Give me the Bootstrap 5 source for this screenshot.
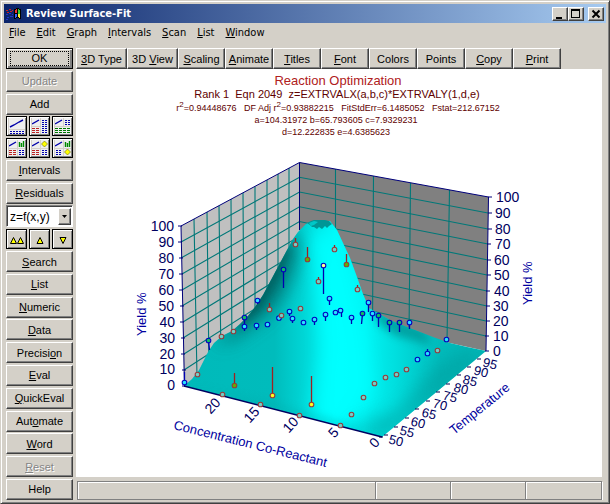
<!DOCTYPE html>
<html lang="en">
<head>
<meta charset="utf-8">
<meta name="viewport" content="width=device-width, initial-scale=1">
<title>Review Surface-Fit</title>
<link href="https://cdn.jsdelivr.net/npm/bootstrap@5.3.0/dist/css/bootstrap.min.css" rel="stylesheet">
<style>
:root{--face:#d4d0c8}
body{background:var(--face);font:11px/14px "Liberation Sans",Arial,sans-serif;color:#000}
.window{border:1px solid;border-color:var(--face) #404040 #404040 var(--face);box-shadow:inset 1px 1px #fff,inset -1px -1px #808080;padding:3px}
.titlebar{height:19px;background:linear-gradient(90deg,#0a246a,#a6caf0);padding:0 2px;color:#fff}
.titlebar h1{font:bold 11px/18px "DejaVu Sans Condensed","DejaVu Sans",sans-serif}
.capbtn,.tool{background:var(--face);border:1px solid;border-color:#fff #404040 #404040 #fff;box-shadow:inset -1px -1px #808080;color:#000;border-radius:0;padding:0;font-size:11px;line-height:14px;white-space:nowrap}
.capbtn{width:16px;height:14px}
.menus{height:20px;font:11px/20px "DejaVu Sans Condensed","DejaVu Sans",sans-serif;padding-left:5px;gap:11px}
.menus a{color:#000;text-decoration:none}
u{text-underline-offset:1px;text-decoration-thickness:1px}
.workarea{padding:5px 0 0 2px;gap:3px}
.side{width:67px}
.tool{height:21px;text-align:center}
.tool:disabled{color:#858585;text-shadow:1px 1px #fff}
.framed{border:1px solid #000;box-shadow:inset 1px 1px #fff,inset -1px -1px #808080}
.default{border:1px solid #000;box-shadow:inset 1px 1px #fff,inset -2px -2px #808080;padding:2px 3px}
.default span{border:1px dotted #000;line-height:13px}
.pic{height:20px;flex:1 1 0}
.pairs{gap:2px}
.combo{height:22px;border:1px solid;border-color:#808080 #fff #fff #808080;box-shadow:inset 1px 1px #404040;background:#fff;padding:2px 1px 1px 2px}
.combo>*{grid-area:1/1}
.combo select{appearance:none;border:0;background:none;font-size:12px;line-height:16px;padding:0 13px 0 1px;width:100%;color:#000}
.drop{width:13px;height:100%;pointer-events:none;justify-self:end}
.topbar .tool{flex:0 0 48px}
.topbar .tool.wide{flex-basis:51px}
.topbar .tool.near{flex-basis:47px}
.plot{background:#fff;min-height:0}
.plot svg{font-family:"Liberation Sans",Arial,sans-serif}
.status{height:19px;margin:4px 0 0 1px;border:1px solid #808080;box-shadow:1px 1px #fff,inset 1px 1px #fff}
.status div{border-right:1px solid #808080;box-shadow:1px 0 #fff}
.status div:last-child{border:0;box-shadow:none}
.pane{width:75px}
.tick{fill:#000060;font-size:14px}
.axis{fill:#0000a0;font-size:13px}
.note{fill:#600000;text-anchor:middle;white-space:pre}
</style>
<script src="https://cdn.jsdelivr.net/npm/bootstrap@5.3.0/dist/js/bootstrap.bundle.min.js"></script>
</head>
<body>
<div class="window d-flex flex-column vh-100">
  <header class="titlebar d-flex align-items-center">
    <svg width="16" height="14" viewBox="0 0 16 14" class="me-1" aria-hidden="true" shape-rendering="crispEdges">
      <path d="M8 2l3-1 4 1v10l-4-1-3 1z" fill="#000"/>
      <path d="M9 3l2-1v4H9z" fill="#e33"/><path d="M12 2l2 1v4h-2z" fill="#3c3"/><path d="M9 7h2v3l-2 1z" fill="#36f"/><path d="M12 7h2v4l-2-1z" fill="#fe3"/>
      <path d="M0 3h2v1H0zM3 2h2v1H3zM6 3h1v1H6zM1 5h2v1H1zM4 4h2v1H4z" fill="#c22"/>
      <path d="M0 7h2v1H0zM3 6h2v1H3zM6 7h1v1H6zM1 10h2v1H1zM4 9h3v1H4zM0 12h2v1H0z" fill="#23c"/>
    </svg>
    <h1 class="m-0 flex-grow-1">Review Surface-Fit</h1>
    <button class="capbtn d-flex" aria-label="Minimize"><svg width="14" height="12"><path d="M3 9h6v2H3z"/></svg></button>
    <button class="capbtn d-flex" aria-label="Maximize"><svg width="14" height="12"><path d="M2 1h9v9H2zM3 3v6h7V3z" fill-rule="evenodd"/></svg></button>
    <button class="capbtn d-flex ms-1" aria-label="Close"><svg width="14" height="12"><path d="M3.500 2.500l7 7m0-7l-7 7" stroke="#000" stroke-width="2"/></svg></button>
  </header>
  <nav class="menus d-flex" aria-label="Menu">
    <a href="#"><u>F</u>ile</a><a href="#"><u>E</u>dit</a><a href="#"><u>G</u>raph</a><a href="#"><u>I</u>ntervals</a><a href="#"><u>S</u>can</a><a href="#"><u>L</u>ist</a><a href="#"><u>W</u>indow</a>
  </nav>
  <div class="workarea d-flex flex-grow-1 overflow-hidden">
    <aside class="side d-flex flex-column justify-content-between flex-shrink-0">
      <button class="tool default d-grid"><span>OK</span></button>
      <button class="tool" disabled>Update</button>
      <button class="tool">Add</button>
      <div class="d-flex pairs">
        <button class="tool framed pic" aria-label="Graph and table"><svg width="16" height="16" viewBox="0 0 16 16"><path fill="#eee" d="M0 0h16v11H0zM0 12h16v4H0z"/><path d="M1 9l4-2 5-3 4-2" stroke="#00a" stroke-width="1.400" fill="none"/><path d="M1 13.500h14M1 15.500h14" stroke="#00a" stroke-dasharray="2 1"/></svg></button>
        <button class="tool framed pic" aria-label="Graph, summary and list"><svg width="16" height="16" viewBox="0 0 16 16"><path fill="#eee" d="M0 0h8v8H0zM0 9h8v7H0zM9 0h7v16H9z"/><path d="M0 6l7-4" stroke="#00a" stroke-width="1.400"/><path d="M10 2.500h6M10 4.500h6M10 6.500h6M10 8.500h6M10 10.500h6M10 12.500h6M10 14.500h6" stroke="#00a" stroke-dasharray="2 1"/><path d="M0 10.500h8M0 12.500h8M0 14.500h8" stroke="#b22" stroke-dasharray="3 1"/></svg></button>
        <button class="tool framed pic" aria-label="Graph, list and summary"><svg width="16" height="16" viewBox="0 0 16 16"><path fill="#eee" d="M0 0h8v8H0zM9 0h7v8H9zM0 9h16v7H0z"/><path d="M0 6l7-4" stroke="#00a" stroke-width="1.400"/><path d="M10 2.500h6M10 4.500h6M10 6.500h6" stroke="#00a" stroke-dasharray="2 1"/><path d="M0 10.500h16M0 12.500h16M0 14.500h16" stroke="#070" stroke-dasharray="3 1"/></svg></button>
      </div>
      <div class="d-flex pairs">
        <button class="tool framed pic" aria-label="Four panels"><svg width="16" height="16" viewBox="0 0 16 16"><path fill="#eee" d="M0 0h8v8H0zM9 0h7v8H9zM0 9h8v7H0zM9 9h7v7H9z"/><path d="M0 6l7-4" stroke="#00a" stroke-width="1.400"/><path d="M10.500 2v5M12.500 3v4M14.500 1v6" stroke="#080" stroke-width="1.400"/><path d="M0 10.500h8M0 12.500h8M0 14.500h8" stroke="#b22" stroke-dasharray="3 1"/><path d="M10 10.500h6M10 12.500h6M10 14.500h6" stroke="#00a" stroke-dasharray="2 1"/></svg></button>
        <button class="tool framed pic" aria-label="Residual panels"><svg width="16" height="16" viewBox="0 0 16 16"><path fill="#eee" d="M0 0h8v8H0zM9 0h7v8H9zM0 9h8v7H0zM9 9h7v7H9z"/><path d="M0 6l7-4" stroke="#00a" stroke-width="1.400"/><path d="M12.500 1l3 3-3 3-3-3z" fill="#ff0" stroke="#660" stroke-width=".6"/><path d="M0 10.500h8M0 12.500h8M0 14.500h8" stroke="#b22" stroke-dasharray="3 1"/><path d="M10 10.500h6M10 12.500h6M10 14.500h6" stroke="#00a" stroke-dasharray="2 1"/></svg></button>
        <button class="tool framed pic" aria-label="Distribution panels"><svg width="16" height="16" viewBox="0 0 16 16"><path fill="#eee" d="M0 0h8v8H0zM9 0h7v8H9zM0 9h8v7H0zM9 9h7v7H9z"/><path d="M0 6l7-4" stroke="#00a" stroke-width="1.400"/><path d="M10.500 2v5M12.500 3v4M14.500 1v6" stroke="#080" stroke-width="1.400"/><path d="M12.500 9l3 3-3 3-3-3z" fill="#ff0" stroke="#660" stroke-width=".6"/><path d="M1 10.500h6M1 12.500h6M1 14.500h6" stroke="#00a" stroke-dasharray="2 1"/></svg></button>
      </div>
      <button class="tool"><u>I</u>ntervals</button>
      <button class="tool"><u>R</u>esiduals</button>
      <div class="combo d-grid">
        <select aria-label="Function"><option>z=f(x,y)</option></select>
        <span class="drop tool"><svg width="11" height="14" class="d-block"><path d="M3 6h5L5.500 9z"/></svg></span>
      </div>
      <div class="d-flex pairs">
        <button class="tool framed pic" aria-label="First"><svg width="16" height="14" viewBox="0 0 16 14"><path d="M1.500 10.500l3-6 3 6zM8.500 10.500l3-6 3 6z" fill="#ff0" stroke="#000"/></svg></button>
        <button class="tool framed pic" aria-label="Previous"><svg width="16" height="14" viewBox="0 0 16 14"><path d="M5 10.500l3-6 3 6z" fill="#ff0" stroke="#000"/></svg></button>
        <button class="tool framed pic" aria-label="Next"><svg width="16" height="14" viewBox="0 0 16 14"><path d="M5 4.500l3 6 3-6z" fill="#ff0" stroke="#000"/></svg></button>
      </div>
      <button class="tool"><u>S</u>earch</button>
      <button class="tool"><u>L</u>ist</button>
      <button class="tool"><u>N</u>umeric</button>
      <button class="tool"><u>D</u>ata</button>
      <button class="tool">Precisi<u>o</u>n</button>
      <button class="tool"><u>E</u>val</button>
      <button class="tool"><u>Q</u>uickEval</button>
      <button class="tool">Aut<u>o</u>mate</button>
      <button class="tool"><u>W</u>ord</button>
      <button class="tool" disabled><u>R</u>eset</button>
      <button class="tool">Help</button>
    </aside>
    <main class="d-flex flex-column flex-grow-1 overflow-hidden">
      <div class="topbar d-flex">
        <button class="tool wide"><u>3</u>D Type</button><button class="tool wide">3D <u>V</u>iew</button><button class="tool near"><u>S</u>caling</button><button class="tool"><u>A</u>nimate</button><button class="tool"><u>T</u>itles</button><button class="tool"><u>F</u>ont</button><button class="tool">Colors</button><button class="tool">Points</button><button class="tool"><u>C</u>opy</button><button class="tool"><u>P</u>rint</button>
      </div>
      <div class="plot flex-grow-1 me-1">
        <svg class="w-100 h-100 d-block" viewBox="76 69 526 408" role="img" aria-label="Reaction Optimization surface plot">
          <defs>
            <clipPath id="surf"><path d="M184 386L192 379 199 370 204 360 208 352 214 343 222 336 232 331 240 324 248 316 255 307 263 295 271 280 279 265 287 250 293 239 298 232 306 224 312 221 330 221 337 230 343 243 350 258 357 277 363 294 369 308 376 312 390 320 407 327 433 337 450 343 467 347 486 351 382 437z"/></clipPath>
            <linearGradient id="base" gradientUnits="userSpaceOnUse" x1="184" x2="486" y1="0" y2="0">
              <stop offset="0" stop-color="#00baba"/><stop offset=".3" stop-color="#00bcbc"/><stop offset=".42" stop-color="#00dcdc"/><stop offset=".5" stop-color="#00f8f8"/><stop offset=".6" stop-color="#00f4f4"/><stop offset=".72" stop-color="#00dada"/><stop offset=".85" stop-color="#00bcbc"/><stop offset="1" stop-color="#00b8b8"/>
            </linearGradient>
            <filter id="soft" x="-50%" y="-50%" width="200%" height="200%"><feGaussianBlur stdDeviation="9"/></filter>
            <filter id="soft2" x="-50%" y="-50%" width="200%" height="200%"><feGaussianBlur stdDeviation="4"/></filter>
            <circle id="pt" r="2.300"/>
          </defs>
          <text class="note" x="338" y="85" font-size="13" style="fill:#b02020">Reaction Optimization</text>
          <text class="note" x="337" y="98" font-size="11">Rank 1  Eqn 2049  z=EXTRVALX(a,b,c)*EXTRVALY(1,d,e)</text>
          <text class="note" x="338" y="111" font-size="9">r<tspan dy="-4" font-size="8">2</tspan><tspan dy="4">=0.94448676   DF Adj r</tspan><tspan dy="-4" font-size="8">2</tspan><tspan dy="4">=0.93882215   FitStdErr=6.1485052   Fstat=212.67152</tspan></text>
          <text class="note" x="336" y="123" font-size="9">a=104.31972 b=65.793605 c=7.9329231</text>
          <text class="note" x="336" y="135" font-size="9">d=12.222835 e=4.6385623</text>

          <path d="M181 226L299.500 162.500V310L184 386z" fill="#c0c0c0"/>
          <path d="M299.500 162.500L488.500 197 486 351 299.500 310z" fill="#808080"/>
          <g stroke="#007878" fill="none" stroke-width="1.100">
            <path d="M194 219L197 377M207 212L209 369M219 206L221 361M231 199L232 354M243 193L244 346M255 186.500L255 338M267 180L267 330M278 174L278 323M289 168L289 316"/>
            <path d="M181 242L299.500 177.300 488 213M181 258L299.500 192 488 229M182 274L299.500 206.800 488 244M182 290L299.500 221.500 488 260M182 306L299.500 236.300 487 275M183 322L299.500 251 487 291M183 338L299.500 265.800 487 306M184 354L299.500 280.500 486 321M184 370L299.500 295.300 486 336"/>
            <path d="M335.500 169V318M373.500 176L372.500 326M410.500 183L409 334M449.500 190L447 342"/>
          </g>
          <path d="M181 226L299.500 162.500 488.500 197M299.500 162.500V230" stroke="#00007a" fill="none"/>
          <g clip-path="url(#surf)">
            <path d="M180 215H490V440H180z" fill="url(#base)"/>
            <path d="M216 346L236 338 264 318 284 296 296 268 302 240 290 230 262 280 236 318z" fill="#006464" filter="url(#soft)" opacity=".7"/>
            <path d="M240 328L262 308 280 276 290 250 284 244 262 284 238 318z" fill="#005050" filter="url(#soft2)" opacity=".65"/>
            <path d="M310 232L336 232 352 280 364 330 372 390 340 432 312 420 322 350 316 280z" fill="#00ffff" filter="url(#soft)" opacity=".9"/>
            <path d="M372 308L380 325 396 336 432 345 424 330 392 316z" fill="#008c8c" filter="url(#soft2)" opacity=".7"/>
            <path d="M382 442L490 354 462 350 430 372 400 410 350 428z" fill="#009c9c" filter="url(#soft)" opacity=".6"/>
            <path d="M184 386L382 440 350 425 270 403z" fill="#00a8a8" filter="url(#soft2)" opacity=".4"/>
          </g>
          <path d="M307 223L311 221 314 220H325L329 221 332 224 329 226 327 228 325 226 322 229 319 227 317 229 314 227 312 227 310 225z" fill="#009696"/>
          <path d="M309 223L314 221 318 222 314 225 311 226z" fill="#00c8c8"/>
          <path d="M181 226L184.500 386M488.500 197L486 351M178 226h4M178 242h4M179 258h4M179 274h4M179 290h4M180 306h4M180 322h4M181 338h4M181 354h4M182 370h4M182 386h3M488 197h4M488 213h4M488 229h4M487 244h4M487 260h4M487 275h4M486 291h4M486 306h4M486 321h4M485 336h4M485 351h4" stroke="#00007a" fill="none"/>
          <path d="M184 386L382 437" stroke="#000060" stroke-width="1.300"/>
          <path d="M477 359h4M467 367h4M457 375h4M446 384h4M436 392h4M426 401h4M415 409h4M405 418h4M394 427h4M384 435h4M379 437h4" stroke="#00004a"/>

          <path d="M295.500 243v-5M307.500 259v-12M334.500 249v-4M346.500 264v-10M318.500 281v-4M269.500 309v-6M234.500 385v-12M272.500 395v-28M311.500 404v-28M357.500 289v-4" stroke="#a02020" stroke-width="1.300"/>
          <path d="M283.500 270v18M323.500 266v28M244.500 318v13M208.500 341l1 9M184.500 382v-10M257.500 301v3M289.500 313v3M292.500 319v4M256.500 327v3M329.500 299v6M314.500 321v4M325.500 315v6M341.500 311v6M351.500 318v6M362.500 314l-1 10M368.500 303v9M372.500 314v7M378.500 316v11M389.500 323v9M399.500 323v9M409.500 323v6M427.500 352v-3" stroke="#0000b0" stroke-width="1.300"/>
          <g stroke="#0000c0" stroke-width="1.100">
            <g fill="#28e4ff"><use href="#pt" x="257.500" y="300.500"/><use href="#pt" x="279" y="318"/><use href="#pt" x="289.500" y="311.500"/><use href="#pt" x="292.500" y="318.500"/><use href="#pt" x="303.500" y="322.500"/><use href="#pt" x="267.500" y="324.500"/><use href="#pt" x="256.500" y="325.500"/><use href="#pt" x="244.500" y="326.500"/><use href="#pt" x="184.500" y="382.500"/><use href="#pt" x="329.500" y="298.500"/><use href="#pt" x="314.500" y="319.500"/><use href="#pt" x="325.500" y="314.500"/><use href="#pt" x="335.500" y="312.500"/><use href="#pt" x="340.500" y="310.500"/><use href="#pt" x="351.500" y="317.500"/><use href="#pt" x="368.500" y="302.500"/><use href="#pt" x="372.500" y="313.500"/><use href="#pt" x="409.500" y="322.500"/><use href="#pt" x="446.500" y="339.500"/><use href="#pt" x="427.500" y="353.500"/><use href="#pt" x="417.500" y="359.500"/></g>
            <g fill="#10c060"><use href="#pt" x="283.500" y="269.500"/><use href="#pt" x="244.500" y="317.500"/><use href="#pt" x="208.500" y="340.500"/><use href="#pt" x="362.500" y="313.500"/><use href="#pt" x="378.500" y="315.500"/><use href="#pt" x="389.500" y="322.500"/><use href="#pt" x="399.500" y="322.500"/></g>
            <use href="#pt" x="323.500" y="265.500" fill="#ffff90"/>
          </g>
          <g stroke="#983838" stroke-width="1.100">
            <g fill="#70d0c8"><use href="#pt" x="295.500" y="244.500"/><use href="#pt" x="334.500" y="249.500"/><use href="#pt" x="318.500" y="281.500"/><use href="#pt" x="269.500" y="309.500"/><use href="#pt" x="281.500" y="315.500"/><use href="#pt" x="300.500" y="308.500"/><use href="#pt" x="233.500" y="331.500"/><use href="#pt" x="221.500" y="336.500"/><use href="#pt" x="197.500" y="374.500"/><use href="#pt" x="222.500" y="394.500"/><use href="#pt" x="260.500" y="404.500"/><use href="#pt" x="299.500" y="415.500"/><use href="#pt" x="357.500" y="289.500"/><use href="#pt" x="437.500" y="350.500"/><use href="#pt" x="406.500" y="369.500"/><use href="#pt" x="396.500" y="374.500"/><use href="#pt" x="385.500" y="377.500"/><use href="#pt" x="374.500" y="383.500"/><use href="#pt" x="363.500" y="397.500"/><use href="#pt" x="351.500" y="414.500"/><use href="#pt" x="340.500" y="425.500"/></g>
            <g fill="#60b000"><use href="#pt" x="307.500" y="259.500"/><use href="#pt" x="346.500" y="264.500"/><use href="#pt" x="234.500" y="385.500"/></g>
            <g fill="#ffff20"><use href="#pt" x="272.500" y="395.500"/><use href="#pt" x="311.500" y="404.500"/></g>
          </g>

          <g class="tick" text-anchor="end"><text x="174" y="231">100</text><text x="174" y="247">90</text><text x="174" y="263">80</text><text x="174" y="279">70</text><text x="174" y="295">60</text><text x="174" y="311">50</text><text x="175" y="327">40</text><text x="175" y="343">30</text><text x="175" y="359">20</text><text x="175" y="374">10</text><text x="175" y="390">0</text></g>
          <g class="tick"><text x="496" y="202">100</text><text x="495" y="218">90</text><text x="495" y="234">80</text><text x="495" y="249">70</text><text x="494" y="265">60</text><text x="494" y="280">50</text><text x="494" y="296">40</text><text x="493" y="311">30</text><text x="493" y="326">20</text><text x="493" y="341">10</text><text x="493" y="356">0</text></g>
          <g class="axis"><text transform="translate(146 336) rotate(-90)">Yield %</text><text transform="translate(532 305) rotate(-90)">Yield %</text><text transform="translate(173 429) rotate(14)">Concentration Co-Reactant</text><text transform="translate(454 435) rotate(-39)">Temperature</text></g>
          <g class="tick" text-anchor="middle"><text transform="translate(216 409) rotate(-47)">20</text><text transform="translate(255 418) rotate(-47)">15</text><text transform="translate(294 428) rotate(-47)">10</text><text transform="translate(337 436) rotate(-47)">5</text><text transform="translate(378 446) rotate(-47)">0</text></g>
          <g class="tick" text-anchor="middle" style="font-size:13px"><text transform="translate(395 445) rotate(14)">50</text><text transform="translate(406 436) rotate(14)">55</text><text transform="translate(417 427) rotate(14)">60</text><text transform="translate(428 418) rotate(14)">65</text><text transform="translate(439 409) rotate(14)">70</text><text transform="translate(449 401) rotate(14)">75</text><text transform="translate(460 393) rotate(14)">80</text><text transform="translate(469 385) rotate(14)">85</text><text transform="translate(480 376) rotate(14)">90</text><text transform="translate(489 368) rotate(14)">95</text></g>
        </svg>
      </div>
      <div class="status d-flex me-1"><div class="flex-grow-1"></div><div class="pane"></div><div class="pane"></div><div class="pane"></div></div>
    </main>
  </div>
</div>
</body>
</html>
